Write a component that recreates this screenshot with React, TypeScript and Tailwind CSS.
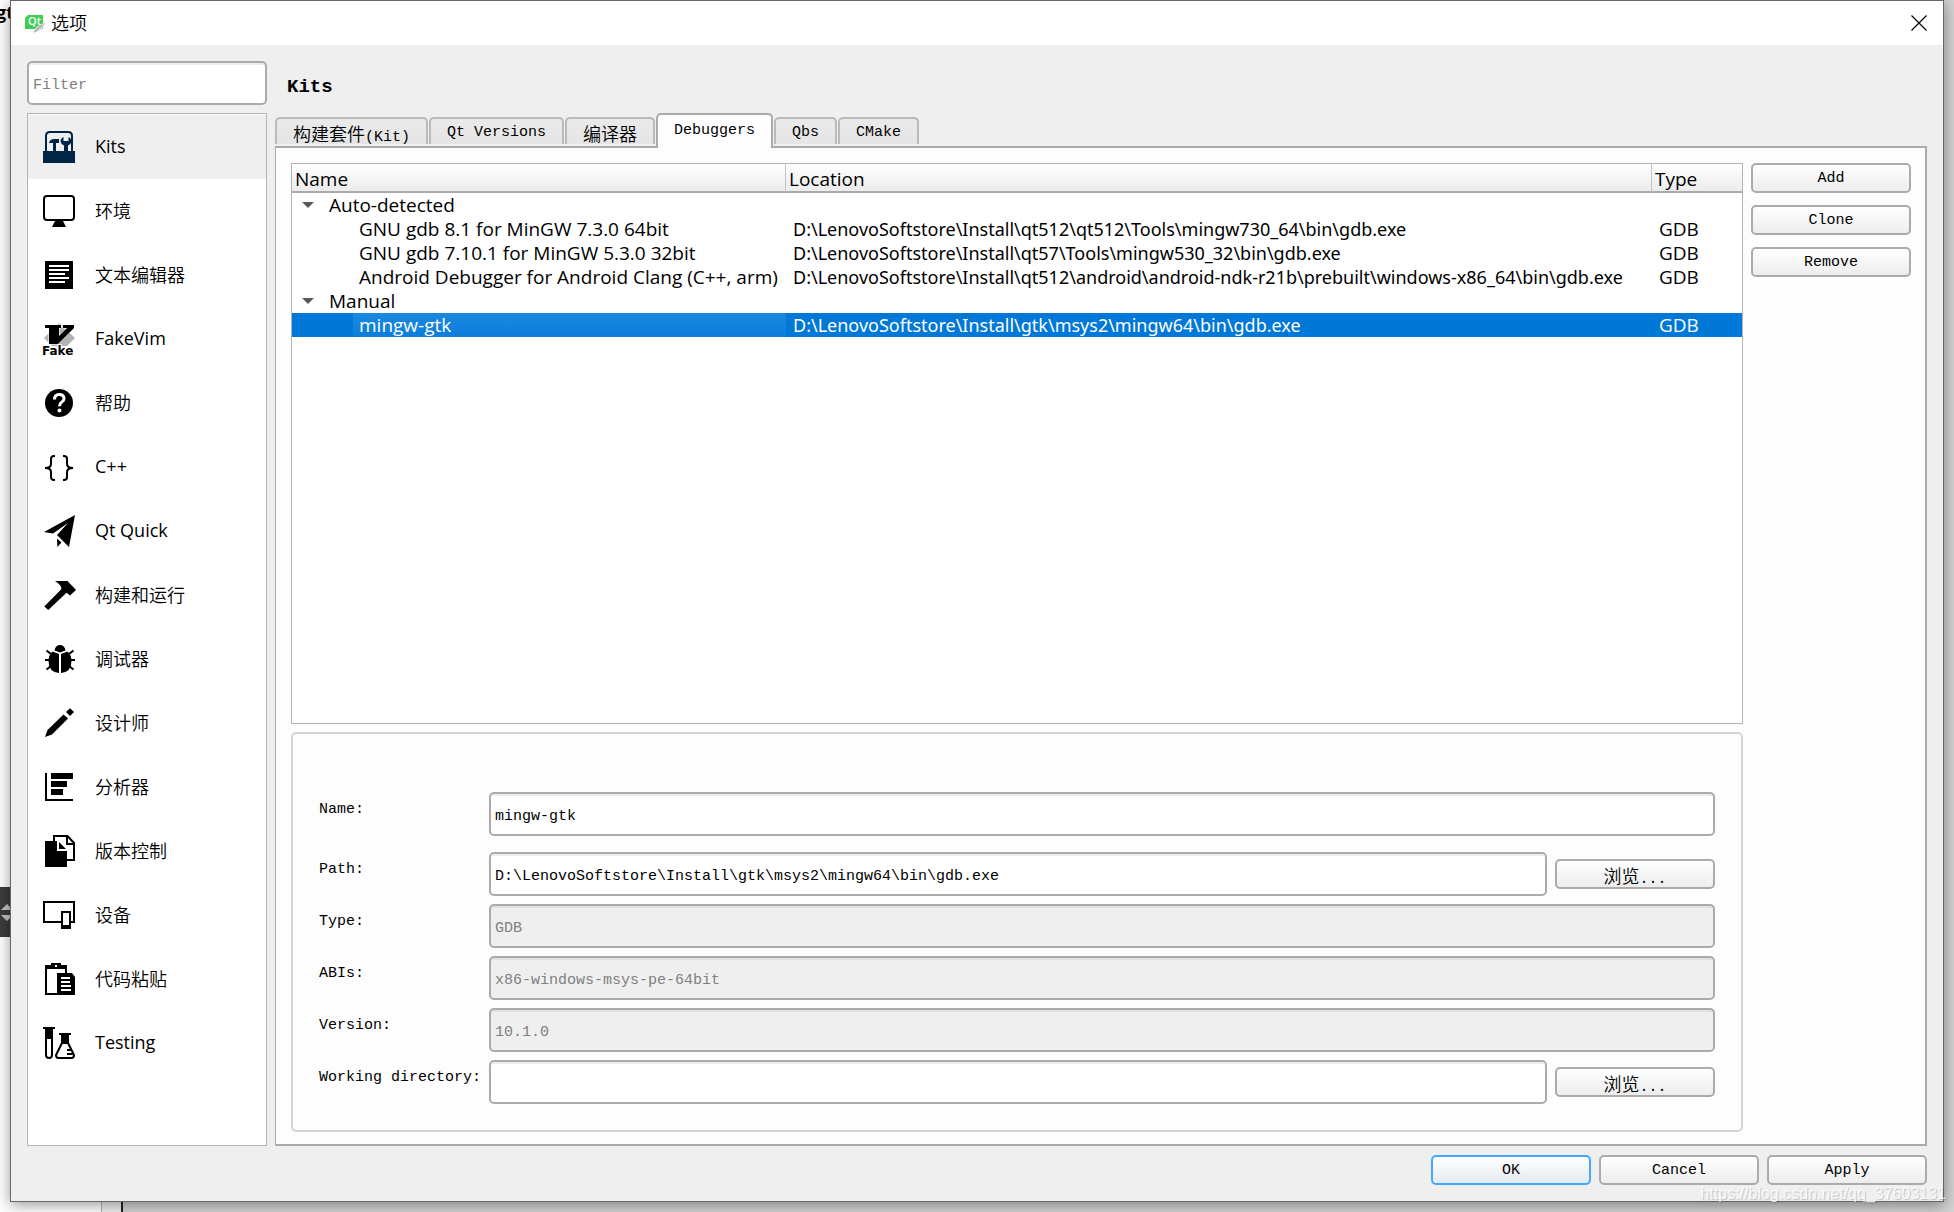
import React from "react";
import { clsx } from "clsx";

const sans = "font-['Open_Sans','Noto_Sans_CJK_SC',sans-serif]";
const mono = "font-['Liberation_Mono','Noto_Sans_CJK_SC',monospace]";
const cjk = "font-['Noto_Sans_CJK_SC',sans-serif] font-[350] text-lg leading-6";

const Icon: React.FC<{ children: React.ReactNode; className?: string }> = ({
  children,
  className,
}) => (
  <svg
    viewBox="0 0 32 32"
    className={clsx("size-8 shrink-0 overflow-visible", className)}
    fill="currentColor"
    aria-hidden="true"
  >
    {children}
  </svg>
);

const KitsIcon = () => (
  <Icon className="text-[#012545]">
    <path d="M3 21V5q0-4 4-4h18q4 0 4 4v16" fill="none" stroke="currentColor" strokeWidth="2" />
    <path d="M0 20h32v12H0z" />
    <path d="M6 12q1-4 5-4h5v4h-3v8h-3v-8z" />
    <path d="M20.5 6v4h5V6q3 1.500 3 4.500-.5 3-3.500 4v6h-4v-6q-3-1-3.500-4 0-3 3-4.500z" />
  </Icon>
);

const MonitorIcon = () => (
  <Icon>
    <rect x="1" y="1" width="30" height="24" rx="3" fill="none" stroke="currentColor" strokeWidth="2" />
    <path d="M12 26h8l3 6H9z" />
  </Icon>
);

const EditorIcon = () => (
  <Icon>
    <path d="M2 2h28v28H2z" />
    <path d="M6 7h20M6 11h20M6 15h16M6 19h20M6 23h16" stroke="#fff" strokeWidth="2" />
  </Icon>
);

const FakeVimIcon = () => (
  <Icon>
    <path d="M16 0l16 15-8 8H9L1 15z" fill="#b3b3b3" />
    <path
      d="M2 2h16v3h-2v8l8-8h-4V2h11v3L15 21H6V5H2z"
      stroke="#fff"
      strokeWidth="1"
      paintOrder="stroke"
    />
    <text
      x="-1"
      y="32"
      fontFamily="DejaVu Sans"
      fontWeight="bold"
      fontSize="12"
      stroke="#fff"
      strokeWidth="2"
      paintOrder="stroke"
    >
      Fake
    </text>
  </Icon>
);

const HelpIcon = () => (
  <Icon>
    <circle cx="16" cy="16" r="14" />
    <path
      d="M11.500 12.500q0-5 4.700-5 4.800 0 4.800 4.200 0 2-2.400 3.500-2.100 1.300-2.100 4"
      fill="none"
      stroke="#fff"
      strokeWidth="3"
    />
    <circle cx="16.500" cy="23.500" r="2" fill="#fff" />
  </Icon>
);

const BracesIcon = () => (
  <Icon>
    <path
      d="M12 5h-1q-3 0-3 3v5q0 4-6 4 6 0 6 4v5q0 3 3 3h1M20 5h1q3 0 3 3v5q0 4 6 4-6 0-6 4v5q0 3-3 3h-1"
      fill="none"
      stroke="currentColor"
      strokeWidth="2"
    />
  </Icon>
);

const PlaneIcon = () => (
  <Icon>
    <path d="M32 0L1 17l9 1.500L25 8 14 20l12 12z" />
    <path d="M14 23.500l4.500 4L14.300 32z" />
  </Icon>
);

const HammerIcon = () => (
  <Icon>
    <path d="M12 2h12.500L33 11l-6 5.500-3.500-2.800L5.300 31l-4-3.500L18.500 10q0-4-6.500-8z" />
  </Icon>
);

const BugIcon = () => (
  <Icon>
    <path d="M11.500 7.500q1-5.500 5.500-5.500t5.500 5.500L17 9.500z" />
    <path d="M16 11v19Q5.500 29 5.500 18q0-6 4-9.500zM18 11v19q10.500-1 10.500-12 0-6-4-9.500z" />
    <path
      d="M3.500 7.500L8 11M2 17h6M3.500 26.500L8 23M30.500 7.500L26 11M32 17h-6M30.500 26.500L26 23"
      stroke="currentColor"
      strokeWidth="2"
    />
  </Icon>
);

const PencilIcon = () => (
  <Icon>
    <path d="M2 30l2.500-7L20.500 7.500l4.500 4L9 27.500z" />
    <path d="M27 1.300l4 3.700-4 4-4-4z" />
  </Icon>
);

const AnalyzerIcon = () => (
  <Icon>
    <path d="M2 2h2v26h26v2H2zM8 2h22v6H8zM8 10h16v6H8zM8 18h12v6H8z" />
  </Icon>
);

const VersionIcon = () => (
  <Icon>
    <path d="M11 7V1h13.500L31 8v17h-8M24 1v8h7" fill="none" stroke="currentColor" strokeWidth="2" />
    <path d="M2 6h12v10h10v16H2z" />
    <path d="M16 7v7h7z" />
  </Icon>
);

const DevicesIcon = () => (
  <Icon>
    <path d="M19 23H1V3h30v20h-4" fill="none" stroke="currentColor" strokeWidth="2" />
    <path d="M18 12h10v18H18zm2 2v12h6V14z" fillRule="evenodd" />
  </Icon>
);

const PasteIcon = () => (
  <Icon>
    <path d="M3 4h20v8M3 3v28h12" fill="none" stroke="currentColor" strokeWidth="2" />
    <path d="M2 2h6V0h10v2h6v4H2zM14 10h15l3 4v18H14z" />
    <path d="M12 2h2v2h-2z" fill="#fff" />
    <path d="M18 15h9M18 19h9M18 23h10M18 27h10" stroke="#fff" strokeWidth="2" />
  </Icon>
);

const TestingIcon = () => (
  <Icon>
    <path d="M0 0h12v2H0zM2 2h8v10H2zM16 6h12v2H16zM18 8h8v9h-8z" />
    <path
      d="M3 11v17q0 3 3 3t3-3V11M19 16l-6 12q0 3 2.500 3h13q2.500 0 2.500-3l-6-12M24 23h4M24 27h6"
      fill="none"
      stroke="currentColor"
      strokeWidth="2"
    />
  </Icon>
);

const categories: { label: string; icon: React.FC; latin?: boolean }[] = [
  { label: "Kits", icon: KitsIcon, latin: true },
  { label: "环境", icon: MonitorIcon },
  { label: "文本编辑器", icon: EditorIcon },
  { label: "FakeVim", icon: FakeVimIcon, latin: true },
  { label: "帮助", icon: HelpIcon },
  { label: "C++", icon: BracesIcon, latin: true },
  { label: "Qt Quick", icon: PlaneIcon, latin: true },
  { label: "构建和运行", icon: HammerIcon },
  { label: "调试器", icon: BugIcon },
  { label: "设计师", icon: PencilIcon },
  { label: "分析器", icon: AnalyzerIcon },
  { label: "版本控制", icon: VersionIcon },
  { label: "设备", icon: DevicesIcon },
  { label: "代码粘贴", icon: PasteIcon },
  { label: "Testing", icon: TestingIcon, latin: true },
];

const tabs: { cjk?: string; latin?: string }[] = [
  { cjk: "构建套件", latin: "(Kit)" },
  { latin: "Qt Versions" },
  { cjk: "编译器" },
  { latin: "Debuggers" },
  { latin: "Qbs" },
  { latin: "CMake" },
];

const groups = [
  {
    name: "Auto-detected",
    items: [
      {
        name: "GNU gdb 8.1 for MinGW 7.3.0 64bit",
        location: "D:\\LenovoSoftstore\\Install\\qt512\\qt512\\Tools\\mingw730_64\\bin\\gdb.exe",
      },
      {
        name: "GNU gdb 7.10.1 for MinGW 5.3.0 32bit",
        location: "D:\\LenovoSoftstore\\Install\\qt57\\Tools\\mingw530_32\\bin\\gdb.exe",
      },
      {
        name: "Android Debugger for Android Clang (C++, arm)",
        location:
          "D:\\LenovoSoftstore\\Install\\qt512\\android\\android-ndk-r21b\\prebuilt\\windows-x86_64\\bin\\gdb.exe",
      },
    ],
  },
  {
    name: "Manual",
    items: [
      {
        name: "mingw-gtk",
        location: "D:\\LenovoSoftstore\\Install\\gtk\\msys2\\mingw64\\bin\\gdb.exe",
      },
    ],
  },
];

const fields = [
  { id: "name", label: "Name:", value: "mingw-gtk" },
  {
    id: "path",
    label: "Path:",
    value: "D:\\LenovoSoftstore\\Install\\gtk\\msys2\\mingw64\\bin\\gdb.exe",
    browse: true,
  },
  { id: "type", label: "Type:", value: "GDB", disabled: true },
  { id: "abis", label: "ABIs:", value: "x86-windows-msys-pe-64bit", disabled: true },
  { id: "version", label: "Version:", value: "10.1.0", disabled: true },
  { id: "workdir", label: "Working directory:", value: "", browse: true },
];

const inputClass =
  "h-11 w-full min-w-0 rounded-[5px] border-2 border-[#ababab] bg-white px-1 pt-1 text-[15px] text-black shadow-[inset_0_2px_0_#ededed] placeholder:text-[#808080] disabled:bg-[#efefef] disabled:text-[#808080] disabled:shadow-[inset_0_2px_0_#e0e0e0]";

const Button: React.FC<{ children: React.ReactNode; primary?: boolean }> = ({
  children,
  primary,
}) => (
  <button
    type="button"
    className={clsx(
      "h-[30px] w-40 shrink-0 rounded-[5px] border-2 pt-0.5 text-center text-[15px] leading-6",
      primary
        ? "border-[#40a9ff] bg-linear-to-b from-white to-[#e4eaf1]"
        : "border-[#ababab] bg-linear-to-b from-white to-[#ededed]"
    )}
  >
    {children}
  </button>
);

const TitleBar = () => (
  <header className="flex h-11 items-center bg-white pr-4 pl-3.5">
    <svg viewBox="0 0 20 20" className="size-5" aria-hidden="true">
      <path d="M3 2h15v14H0V5z" fill="#41cd52" />
      <text x="3" y="12" fontFamily="Open Sans" fontWeight="600" fontSize="11" fill="#fff">
        Qt
      </text>
      <path d="M9 19q0-4 4-6l7-4q0 5-5 8-2 2-5 2z" fill="#d6d6d6" />
      <path d="M9 19.500l8-7.500" stroke="#8c8c8c" strokeWidth="1" />
    </svg>
    <h1 className={clsx(cjk, "ml-1.5 pb-0.5")}>选项</h1>
    <button type="button" aria-label="Close" className="ml-auto">
      <svg viewBox="0 0 16 16" className="size-4" stroke="#000" strokeWidth="1.200">
        <path d="M.5.500l15 15M15.500.500l-15 15" />
      </svg>
    </button>
  </header>
);

const Sidebar = () => (
  <aside className="flex w-60 shrink-0 flex-col gap-2">
    <input
      type="text"
      aria-label="Filter"
      placeholder="Filter"
      className={clsx(inputClass, "shrink-0")}
    />
    <nav className="flex-1 border border-[#b4b4b4] bg-white py-px">
      {categories.map(({ label, icon: CategoryIcon, latin }, idx) => (
        <button
          key={label}
          type="button"
          className={clsx(
            "flex h-16 w-full items-center gap-5 pl-[15px]",
            idx === 0 && "bg-[#efefef]"
          )}
        >
          <CategoryIcon />
          <span className={clsx("pb-0.5", latin ? [sans, "text-lg leading-6"] : cjk)}>
            {label}
          </span>
        </button>
      ))}
    </nav>
  </aside>
);

const TabBar = () => (
  <div role="tablist" className="flex h-[33px] items-end gap-px">
    {tabs.map((tab, idx) => {
      const active = idx === 3;
      return (
        <button
          key={idx}
          type="button"
          role="tab"
          aria-selected={active}
          className={clsx(
            "shrink-0 rounded-t-[5px] border-2 border-b-0 px-4 text-[15px] leading-6",
            active
              ? "z-10 -mb-0.5 h-[35px] border-[#ababab] bg-linear-to-b from-white to-[#fdfdfd] pb-0.5"
              : "mb-0.5 h-[27px] border-[#bababa] bg-linear-to-b from-[#eaeaea] to-[#e5e5e5] pt-0.5"
          )}
        >
          {tab.cjk && <span className={cjk}>{tab.cjk}</span>}
          {tab.latin}
        </button>
      );
    })}
  </div>
);

const headerCell =
  "h-[29px] border-b-2 border-[#ababab] bg-linear-to-b from-white to-[#ececec] px-[3px] pt-0.5 text-left font-normal";

const DebuggerTree = () => (
  <div className="flex-1 border border-[#b4b4b4] bg-white">
    <table
      className={clsx(
        sans,
        "w-full table-fixed border-separate border-spacing-0 text-[19px] leading-6 whitespace-nowrap"
      )}
    >
      <colgroup>
        <col className="w-[494px]" />
        <col />
        <col className="w-[90px]" />
      </colgroup>
      <thead>
        <tr>
          <th className={clsx(headerCell, "border-r border-r-[#c4c4c4]")}>Name</th>
          <th className={clsx(headerCell, "border-r border-r-[#c4c4c4]")}>Location</th>
          <th className={headerCell}>Type</th>
        </tr>
      </thead>
      <tbody>
        {groups.map((group) => (
          <React.Fragment key={group.name}>
            <tr>
              <td colSpan={3} className="h-6 p-0">
                <div className="flex items-center pl-2.5">
                  <svg viewBox="0 0 12 6" className="h-1.5 w-3" aria-hidden="true">
                    <path d="M0 0h12L6 6z" fill="#595959" />
                  </svg>
                  <span className="pl-[15px]">{group.name}</span>
                </div>
              </td>
            </tr>
            {group.items.map((item) => {
              const selected = item.name === "mingw-gtk";
              return (
                <tr key={item.name} className={clsx(selected && "bg-[#0078d7] text-white")}>
                  <td className="h-6 p-0 pl-[61px]">
                    <div
                      className={clsx(
                        "pl-[6px]",
                        selected && "rounded-xs bg-linear-to-b from-[#1a88df] to-[#0a7edb]"
                      )}
                    >
                      {item.name}
                    </div>
                  </td>
                  <td className="h-6 p-0 pl-[7px] font-['Noto_Sans',sans-serif] text-lg leading-6">
                    {item.location}
                  </td>
                  <td className="h-6 p-0 pl-[7px]">GDB</td>
                </tr>
              );
            })}
          </React.Fragment>
        ))}
      </tbody>
    </table>
  </div>
);

const Browse = () => (
  <Button>
    <span className={cjk}>浏览</span>
    <span className="font-['Liberation_Mono',monospace]">...</span>
  </Button>
);

const DebuggerForm = () => (
  <form className="flex flex-col gap-2 rounded-[5px] border-2 border-[#d5d5d5] px-[26px] pt-[58px] pb-[26px]">
    {fields.map((field) => (
      <div key={field.id} className={clsx("flex items-start", field.id === "name" && "mb-2")}>
        <label htmlFor={field.id} className="w-[170px] shrink-0 pt-1.5 text-[15px] leading-6">
          {field.label}
        </label>
        <div className="flex flex-1 items-center gap-2">
          <input
            id={field.id}
            type="text"
            defaultValue={field.value}
            disabled={field.disabled}
            className={inputClass}
          />
          {field.browse && <Browse />}
        </div>
      </div>
    ))}
  </form>
);

// What shows of the application behind the dialog, round its edges
const Backdrop = () => (
  <div className="absolute inset-0 flex bg-[#d2d2d2]" aria-hidden="true">
    <div className="flex w-[102px] flex-col border-r border-[#b4b4b4] bg-white">
      <p className={clsx(sans, "h-[887px] -indent-1 text-lg leading-6 font-bold")}>gt</p>
      <div className="flex h-[50px] w-3 flex-col items-center justify-center bg-[#3c3c3c]">
        <svg viewBox="0 0 12 18" className="h-[18px] w-3" fill="#c4c4c4">
          <path d="M1 7l6-6 6 6zM1 12h12l-6 6z" />
        </svg>
      </div>
    </div>
    <div className="w-[21px] border-r-2 border-[#222] bg-[#f0f0f0]" />
  </div>
);

export default function App() {
  return (
    <div className={clsx(mono, "relative flex min-h-screen overflow-hidden px-2.5 pb-2.5 text-black")}>
      <Backdrop />
      <main className="relative flex min-w-0 flex-1 flex-col border border-[#666] bg-[#efefef] shadow-[0_3px_14px_rgba(0,0,0,0.4)]">
        <TitleBar />
        <div className="flex flex-1 flex-col gap-[9px] p-4">
          <div className="flex flex-1 gap-2">
            <Sidebar />
            <section className="flex min-w-0 flex-1 flex-col">
              <h2 className="mb-1 pt-1 pl-3 text-[19px] leading-11 font-bold">Kits</h2>
              <TabBar />
              <div className="flex flex-1 gap-2 border-2 border-l border-[#ababab] bg-[#fdfdfd] pt-[15px] pr-3.5 pb-3 pl-[15px]">
                <div className="flex min-w-0 flex-1 flex-col gap-2">
                  <DebuggerTree />
                  <DebuggerForm />
                </div>
                <div className="flex flex-col gap-3">
                  <Button>Add</Button>
                  <Button>Clone</Button>
                  <Button>Remove</Button>
                </div>
              </div>
            </section>
          </div>
          <footer className="flex justify-end gap-2">
            <Button primary>OK</Button>
            <Button>Cancel</Button>
            <Button>Apply</Button>
          </footer>
        </div>
      </main>
      <p className="absolute right-2 bottom-1 font-['Liberation_Sans',sans-serif] text-base leading-7 text-white/80 [text-shadow:1px_1px_1px_rgba(0,0,0,0.2)]">
        https://blog.csdn.net/qq_37603131
      </p>
    </div>
  );
}
